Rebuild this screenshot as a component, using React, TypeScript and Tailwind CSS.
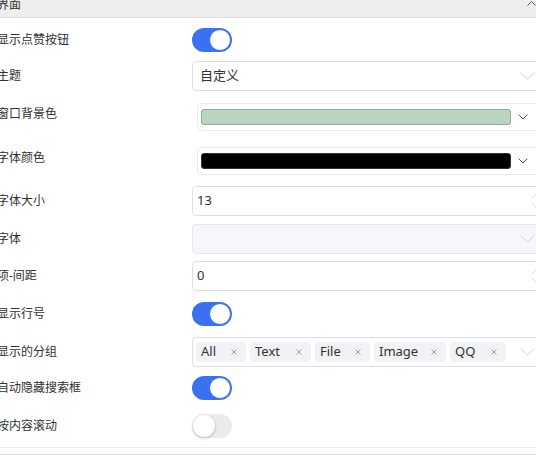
import React from 'react';

const FONT = { fontFamily: '"Noto Sans", "Noto Sans CJK SC", sans-serif' };

const Chevron: React.FC<{ className?: string; light?: boolean }> = ({ className, light }) => (
  <svg className={className} width="15" height="8" viewBox="0 0 15 8" fill="none">
    <path d="M0.5 0.5 L7.5 7 L14.5 0.5" stroke={light ? '#cfd3da' : '#606266'} strokeWidth="1" />
  </svg>
);

const SmallChevron: React.FC = () => (
  <svg width="10" height="6" viewBox="0 0 10 6" fill="none">
    <path d="M0.5 0.5 L5 5 L9.5 0.5" stroke="#555" strokeWidth="1" />
  </svg>
);

const Switch: React.FC<{ on?: boolean }> = ({ on }) =>
  on ? (
    <div className="w-[40px] h-[24px] rounded-full bg-[#3a70f2] flex items-center justify-end pr-[1px]">
      <div className="w-[22px] h-[22px] rounded-full bg-white border border-[#3a70f2]" />
    </div>
  ) : (
    <div className="w-[40px] h-[24px] rounded-full bg-[#ebebeb] flex items-center justify-start pl-[1px]">
      <div className="w-[22px] h-[22px] rounded-full bg-white shadow-[0_1px_3px_rgba(0,0,0,0.25)]" />
    </div>
  );

const Select: React.FC<{ value?: string; disabled?: boolean; children?: React.ReactNode }> = ({ value, disabled, children }) => (
  <div
    className={`w-[354px] h-[30px] rounded-[4px] border flex items-center ${
      disabled ? 'bg-[#f5f7fa] border-[#e4e7ed]' : 'bg-white border-[#dcdfe6]'
    }`}
  >
    <div className="flex-1 flex items-center pl-[7px] text-[13px] text-[#303133] overflow-hidden">
      {children ?? value}
    </div>
    <Chevron light className="mr-[10px] shrink-0" />
  </div>
);

const NumberInput: React.FC<{ value: string }> = ({ value }) => (
  <div className="w-[354px] h-[30px] rounded-[4px] border border-[#dcdfe6] bg-white flex items-center relative">
    <span className="pl-[4px] text-[13px] text-[#303133]">{value}</span>
    <svg className="absolute left-[338px] top-[6px]" width="12" height="16" viewBox="0 0 12 16" fill="none">
      <path d="M0.5 6 L6 0.5 L11.5 6" stroke="#d5d8de" strokeWidth="1" />
      <path d="M0.5 10 L6 15.5 L11.5 10" stroke="#d5d8de" strokeWidth="1" />
    </svg>
  </div>
);

const ColorPicker: React.FC<{ color: string; border: string }> = ({ color, border }) => (
  <div className="ml-[5px] w-[349px] h-[28px] rounded-[4px] border border-[#ebebeb] bg-white flex items-center pl-[3px]">
    <div className="w-[310px] h-[16px] rounded-[3px] border" style={{ backgroundColor: color, borderColor: border }} />
    <div className="ml-[7px] flex items-center">
      <SmallChevron />
    </div>
  </div>
);

const Tag: React.FC<{ label: string; w: number }> = ({ label, w }) => (
  <div
    className="h-[20px] rounded-[4px] bg-[#f0f2f5] flex items-center justify-between pl-[5px] pr-[9px] text-[13px] text-[#303133] shrink-0"
    style={{ width: w }}
  >
    <span>{label}</span>
    <svg width="6" height="6" viewBox="0 0 6 6" fill="none">
      <path d="M0.5 0.5 L5.5 5.5 M5.5 0.5 L0.5 5.5" stroke="#8e9198" strokeWidth="0.9" />
    </svg>
  </div>
);

const Row: React.FC<{ label: string; mt: number; h: number; labelShift?: boolean; children: React.ReactNode }> = ({
  label,
  mt,
  h,
  labelShift,
  children,
}) => (
  <div className="flex items-center" style={{ marginTop: mt, height: h }}>
    <div className={`w-[195px] shrink-0 text-[12px] leading-[16px] text-[#303133] ${labelShift ? 'mb-[6px]' : ''}`}>
      {label}
    </div>
    {children}
  </div>
);

const App: React.FC = () => {
  return (
    <div className="w-[536px] h-[456px] overflow-hidden bg-white relative" style={FONT}>
      <div className="w-[552px] -ml-[3px]">
        {/* Section header */}
        <div className="h-[18px] bg-[#eeeeee] border-b border-[#dcdcdc] flex items-start justify-between">
          <span className="text-[12px] leading-[12px] -mt-[1px] text-[#303133]">界面</span>
          <svg className="mr-[13px] mt-[1px]" width="9" height="5" viewBox="0 0 9 5" fill="none">
            <path d="M0.5 4.5 L4.5 0.5 L8.5 4.5" stroke="#555" strokeWidth="1" />
          </svg>
        </div>

        <Row label="显示点赞按钮" mt={10} h={24}>
          <Switch on />
        </Row>
        <Row label="主题" mt={9} h={30}>
          <Select value="自定义" />
        </Row>
        <Row label="窗口背景色" mt={12} h={28} labelShift>
          <ColorPicker color="#b9d4c0" border="#9aa59d" />
        </Row>
        <Row label="字体颜色" mt={16} h={28} labelShift>
          <ColorPicker color="#000000" border="#333333" />
        </Row>
        <Row label="字体大小" mt={11} h={30}>
          <NumberInput value="13" />
        </Row>
        <Row label="字体" mt={8} h={30}>
          <Select disabled />
        </Row>
        <Row label="项-间距" mt={7} h={30}>
          <NumberInput value="0" />
        </Row>
        <Row label="显示行号" mt={11} h={24}>
          <Switch on />
        </Row>
        <Row label="显示的分组" mt={11} h={30}>
          <Select>
            <div className="flex items-center gap-[4px] -ml-[4px]">
              <Tag label="All" w={50} />
              <Tag label="Text" w={61} />
              <Tag label="File" w={55} />
              <Tag label="Image" w={72} />
              <Tag label="QQ" w={56} />
            </div>
          </Select>
        </Row>
        <Row label="自动隐藏搜索框" mt={9} h={24}>
          <Switch on />
        </Row>
        <Row label="按内容滚动" mt={14} h={24}>
          <Switch />
        </Row>

        <div className="mt-[9px] border-t border-[#ebebeb] h-[7px]" />
        <div className="border-t border-[#dedede] h-[4px]" />
      </div>
    </div>
  );
};

export default App;
